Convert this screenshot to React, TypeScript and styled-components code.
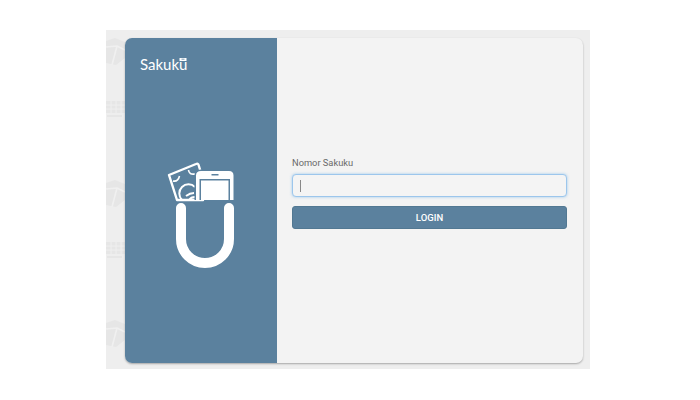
import React from 'react';
import styled, { createGlobalStyle } from 'styled-components';

const GlobalStyle = createGlobalStyle`
  html, body {
    margin: 0;
    padding: 0;
    background: #fff;
  }
  body {
    font-family: Roboto, "Liberation Sans", sans-serif;
  }
`;

const Page = styled.div`
  width: 700px;
  height: 400px;
  padding: 30px 110px 31px 106px;
  box-sizing: border-box;
`;

const Backdrop = styled.div`
  height: 339px;
  display: flex;
  padding: 8px 7px 6px 0;
  box-sizing: border-box;
  background: #eeeeee;
`;

const Gutter = styled.div`
  width: 19px;
  flex: none;
  overflow: hidden;
  display: flex;
  flex-direction: column;
`;

const Tile = styled.svg<{ $after: number }>`
  display: block;
  flex: none;
  margin-bottom: ${(p) => p.$after}px;
`;

const Card = styled.div`
  flex: 1;
  display: flex;
  border-radius: 7px;
  overflow: hidden;
  background: #f3f3f3;
  box-shadow: 0 1px 2px rgba(0, 0, 0, 0.3);
`;

const Side = styled.aside`
  width: 152px;
  flex: none;
  display: flex;
  flex-direction: column;
  align-items: center;
  background: #5b819e;
  color: #fff;
`;

const Brand = styled.div`
  align-self: flex-start;
  margin: 16px 0 0 15px;
  font-family: Lato, "Liberation Sans", sans-serif;
  font-size: 15px;
  line-height: 20px;
  font-weight: 400;
`;

const LastLetter = styled.span`
  position: relative;
`;

const Badge = styled.svg`
  position: absolute;
  left: 0;
  top: 3px;
`;

const Logo = styled.svg`
  margin-top: 86px;
  display: block;
`;

const Main = styled.main`
  flex: 1;
  display: flex;
  flex-direction: column;
  justify-content: center;
  padding: 0 16px 16px 15px;
`;

const Label = styled.label`
  font-size: 9.3px;
  font-weight: 400;
  line-height: 14px;
  color: #6a6a6a;
  margin: 0 0 4px;
`;

const Field = styled.div`
  height: 23px;
  display: flex;
  align-items: center;
  padding-left: 7px;
  border: 1px solid #9cc6ec;
  border-radius: 4px;
  box-shadow: 0 0 3px rgba(102, 175, 233, 0.6);
  background: #f4f4f4;
  box-sizing: border-box;
`;

const Caret = styled.span`
  width: 1px;
  height: 12px;
  background: #888;
`;

const Submit = styled.button`
  height: 23px;
  margin-top: 9px;
  border: 1px solid #527892;
  border-radius: 3px;
  background: #5b819e;
  color: #fff;
  font-family: inherit;
  font-size: 9.5px;
  font-weight: 500;
  padding: 0;
`;

const WalletTile = ({ after }: { after: number }) => (
  <Tile $after={after} width="19" height="27" viewBox="0 0 19 27">
    <path d="M0 3 L9 0 L19 4 V20 L10 27 L0 25 Z" fill="#e6e6e6" />
    <path d="M0 9 L11 8 L19 12 M11 8 L6 27" fill="none" stroke="#f0f0f0" strokeWidth="1.6" />
  </Tile>
);

const CartTile = ({ after }: { after: number }) => (
  <Tile $after={after} width="19" height="20" viewBox="0 0 19 20">
    <path d="M0 1 H19 V13 H0 Z" fill="#e6e6e6" />
    <path d="M0 5 H19 M0 9 H19 M5 1 V13 M10 1 V13 M15 1 V13" stroke="#efefef" strokeWidth="1" />
    <path d="M1 16 H16" stroke="#e6e6e6" strokeWidth="2" />
  </Tile>
);

const App: React.FC = () => (
  <Page>
    <GlobalStyle />
    <Backdrop>
      <Gutter>
        <WalletTile after={35} />
        <CartTile after={60} />
        <WalletTile after={34} />
        <CartTile after={59} />
        <WalletTile after={0} />
      </Gutter>
      <Card>
        <Side>
          <Brand>
            Sakuk
            <LastLetter>
              u
              <Badge width="8" height="4" viewBox="0 0 8 4">
                <path d="M0.5 0 H7.5 V3 H0.5 Z" fill="#fff" />
                <path d="M2.5 1.2 H5.5" stroke="#5b819e" strokeWidth="0.8" />
              </Badge>
            </LastLetter>
          </Brand>
          <Logo width="72" height="110" viewBox="0 0 72 110">
            {/* banknote */}
            <path
              d="M4 15 L31 4 Q33 3 33.6 5 L37 16 L38 40 L12 40 Z"
              fill="none"
              stroke="#fff"
              strokeWidth="2.4"
              strokeLinejoin="round"
            />
            <path
              d="M8 21 Q13 22 14.5 16 M23.5 10 Q24 15 30 14"
              fill="none"
              stroke="#fff"
              strokeWidth="1.6"
            />
            <path
              d="M17 40 A9 9 0 0 1 30 27 M21 36 Q25 33 29 33 M24 40 Q26 37 30 37"
              fill="none"
              stroke="#fff"
              strokeWidth="2"
            />
            {/* phone */}
            <path
              d="M36 9.5 H64 Q70 9.5 70 15.5 V40 H29.5 V15.5 Q29.5 9.5 36 9.5 Z"
              fill="#5b819e"
            />
            <path
              fillRule="evenodd"
              d="M36 11 H64 Q68.5 11 68.5 15.5 V40 H31 V15.5 Q31 11 36 11 Z M34.5 19 V40 H65 V19 Z M46.5 14 V15.4 H53.5 V14 Z"
              fill="#fff"
            />
            <path d="M36 20.5 H63.5 V40 H36 Z" fill="#fff" />
            {/* pocket */}
            <path
              d="M16 48 V79 A24 24 0 0 0 64 79 V48"
              fill="none"
              stroke="#fff"
              strokeWidth="10"
              strokeLinecap="round"
            />
          </Logo>
        </Side>
        <Main>
          <Label>Nomor Sakuku</Label>
          <Field>
            <Caret />
          </Field>
          <Submit type="button">LOGIN</Submit>
        </Main>
      </Card>
    </Backdrop>
  </Page>
);

export default App;
